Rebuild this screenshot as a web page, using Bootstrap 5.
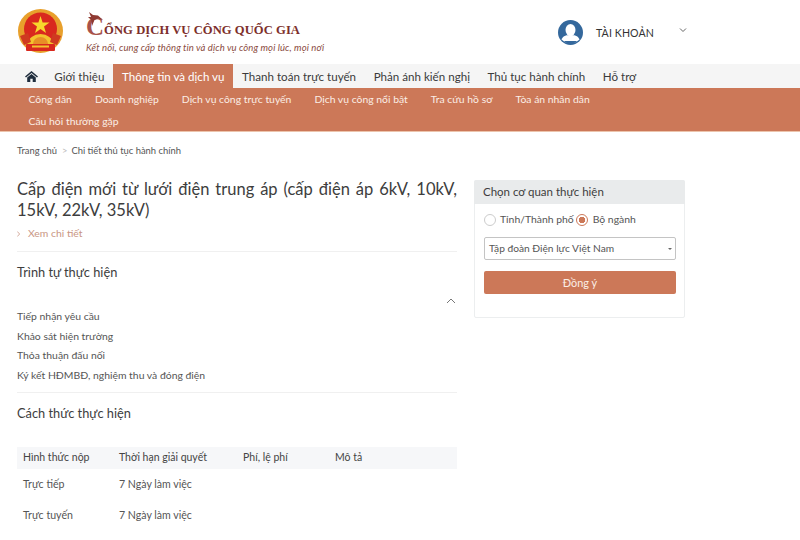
<!DOCTYPE html>
<html lang="vi"><head><meta charset="utf-8"><title>Cổng dịch vụ công quốc gia</title>
<link href="https://cdn.jsdelivr.net/npm/bootstrap@5.3.0/dist/css/bootstrap.min.css" rel="stylesheet">
<style>
html,body{height:540px;overflow:hidden}
body{font-family:Lato,"Noto Sans",sans-serif;font-size:11.5px;color:#444;background:#fff}
a{text-decoration:none}
.top-head{height:64px;padding-left:17px}
.crest{margin-top:6px}
.brand-block{margin-left:22px;margin-top:12px}
.brand-name{font-family:"Liberation Serif",serif;font-weight:700;font-size:12.6px;color:#7d2f2b;line-height:30px;height:30px;position:relative;letter-spacing:.05px}
.brand-c{font-size:25px;color:#a8524a;vertical-align:-1px}
.brand-dragon{position:absolute;left:0;top:0}
.brand-sub{font-style:italic;font-size:9.5px;color:#8a4a40;line-height:12px;letter-spacing:.1px}
.acct{margin-left:auto;margin-right:113px;margin-top:7px;height:50px;width:129px;color:#333;font-size:10.6px}
.acct-name{margin-left:13px;margin-top:3px;letter-spacing:.1px}
.acct-caret{margin-left:auto;margin-top:-5px}
.main-nav{background:#f5f5f5;height:24px;padding-left:25px}
.main-nav a{color:#3b3b3b;font-size:11.6px;line-height:25px;display:block;padding:0 8.8px}
.main-nav a.home-link{padding:0 7.5px 0 0}
.main-nav a.on{background:#cc7858;color:#fff}
.sub-nav{background:#cc7858;border-bottom:1px solid #ecc4ac;height:44px;padding-left:17px;padding-right:150px}
.sub-nav a{color:#fbeee6;font-size:10.4px;line-height:22px;display:block;padding:0 11.5px}
.crumbs{padding:12px 17px 0;height:45px;font-size:9.4px;line-height:14px;color:#555}
.crumbs .sep{color:#bbb;margin:0 4px 0 5px}
.page-cols{padding-left:17px;width:685px;gap:17px;align-items:flex-start}
.left-col{width:440px;flex:none}
.right-col{width:211px;flex:none;margin-top:3px}
.doc-title{font-size:16.5px;line-height:21px;font-weight:400;color:#3d3d3d;text-align:justify;margin:0;padding-top:2px}
.doc-more{color:#c99684;font-size:10.4px;line-height:14px;margin-top:5px;border-bottom:1px solid #f0f0f0;height:26px}
.doc-more span{margin-left:8px}
.sec-title{font-size:12.8px;line-height:16px;color:#3d3d3d;margin:0;font-weight:400}
.sec-one{padding-top:12px;height:46px}
.step-toggle{height:11px;text-align:right;padding-right:1px;line-height:0}
.step{font-size:10.4px;line-height:14px;height:19.5px;color:#555}
.sec-rule{border-top:1px solid #f0f0f0;margin-top:5px;padding-top:12px;height:55px}
.fee-table{font-size:10.6px;color:#555;margin:0;table-layout:fixed;width:440px}
.fee-table th{background:#f6f7f9;font-weight:400;font-size:10.5px;color:#444;padding:0 6px;height:22px;border:0;box-shadow:none;vertical-align:middle}
.fee-table td{padding:0 6px;height:31px;border:0;color:#555;box-shadow:none;vertical-align:middle}
.agency-box{border:1px solid #eceeef;border-radius:2px;height:138px}
.agency-head{background:#e9ebec;height:24px;line-height:24px;padding:0 9px;color:#3d3d3d;font-size:11.5px;margin:-1px -1px 0;border-radius:2px 2px 0 0}
.agency-body{padding:0 8px 0 9px}
.radio-row{height:33px;color:#555;font-size:10.4px;padding-bottom:2px}
.radio-dot{width:12px;height:12px;border-radius:50%;border:1px solid #ccc;flex:none;margin-right:4px;background:#fff;display:block}
.radio-dot.sel{border-color:#cc7858;background:radial-gradient(circle,#cc7858 3px,#fff 3.5px);margin-left:2px;margin-right:5px}
.agency-select{height:23px;border:1px solid #c4c4c4;border-radius:2px;padding:0 4px;color:#555;font-size:10.2px;line-height:21px;margin-bottom:11px}
.agency-select i{border:2.5px solid transparent;border-top-color:#666;border-bottom:0;display:block;margin-right:-1px}
.agree-btn{background:#cc7858;color:#fbeee6;font-size:10.9px;height:23px;line-height:21px;padding:0;border:0;border-radius:2px;width:100%;display:block}
</style></head><body>
<header class="top-head d-flex align-items-start">
  <svg class="crest" width="47" height="50" viewBox="0 0 47 50" role="img" aria-label="Quốc huy">
    <ellipse cx="23.5" cy="25" rx="22.5" ry="22" fill="#e8a02c"/>
    <circle cx="23.5" cy="23" r="16.5" fill="#d9281e"/>
    <polygon points="23.5,10 25.6,16.5 32.5,16.5 27,20.6 29,27 23.5,23 18,27 20,20.6 14.5,16.5 21.4,16.5" fill="#f7d72c"/>
    <path d="M11 38 A12.5 10 0 0 1 36 38Z" fill="#f3c22e"/>
    <path d="M16 38 A7.5 7 0 0 1 31 38Z" fill="#e88e26"/>
    <path d="M3 30 L11 27 L14 36 L7 39Z M44 30 L36 27 L33 36 L40 39Z" fill="#cf3a20"/>
    <rect x="9" y="38" width="29" height="7" rx="1" fill="#d9281e"/>
    <rect x="15" y="39.5" width="17" height="2" fill="#f3c22e"/>
  </svg>
  <div class="brand-block">
    <div class="brand-name"><svg class="brand-dragon" width="18" height="14" viewBox="0 0 18 14" aria-hidden="true"><path d="M3 0 L7 3 L12 3.5 L17 8 L12 6.5 L8.5 8 L6 14 L5.2 8 L2 5 L5 5 Z" fill="#8f3a32"/></svg><span class="brand-c">C</span>ỔNG DỊCH VỤ CÔNG QUỐC GIA</div>
    <div class="brand-sub">Kết nối, cung cấp thông tin và dịch vụ công mọi lúc, mọi nơi</div>
  </div>
  <div class="acct d-flex align-items-center">
    <svg width="25" height="25" viewBox="0 0 25 25" aria-hidden="true"><circle cx="12.5" cy="12.5" r="12.5" fill="#34689c"/><ellipse cx="12.5" cy="10" rx="5" ry="6" fill="#fff"/><path d="M3.5 19.5 C5 15.5 9 15 12.5 15 C16 15 20 15.5 21.5 19.5 C19 22 16 23 12.5 23 C9 23 6 22 3.5 19.5Z" fill="#fff"/><path d="M6 21 H19 C17 23 15 24 12.5 24 C10 24 8 23 6 21Z" fill="#34689c"/></svg>
    <span class="acct-name">TÀI KHOẢN</span>
    <svg class="acct-caret" width="8" height="6" viewBox="0 0 8 6" aria-hidden="true"><path d="M1 1.5 L4 4.5 L7 1.5" fill="none" stroke="#666" stroke-width="1"/></svg>
  </div>
</header>
<nav class="main-nav d-flex">
  <a class="home-link d-flex align-items-center" href="#" aria-label="Trang chủ"><svg width="13" height="11" viewBox="0 0 13 11" aria-hidden="true"><path d="M6.5 0 L13 5.6 L12 6.6 L6.5 2 L1 6.6 L0 5.6Z M2.2 6.6 L6.5 3 L10.8 6.6 V11 H7.7 V7.8 H5.3 V11 H2.2Z" fill="#1f2d3d"/></svg></a>
  <a href="#">Giới thiệu</a><a class="on" href="#">Thông tin và dịch vụ</a><a href="#">Thanh toán trực tuyến</a><a href="#">Phản ánh kiến nghị</a><a href="#">Thủ tục hành chính</a><a href="#">Hỗ trợ</a>
</nav>
<nav class="sub-nav d-flex flex-wrap">
  <a href="#">Công dân</a><a href="#">Doanh nghiệp</a><a href="#">Dịch vụ công trực tuyến</a><a href="#">Dịch vụ công nổi bật</a><a href="#">Tra cứu hồ sơ</a><a href="#">Tòa án nhân dân</a><a href="#">Câu hỏi thường gặp</a>
</nav>
<div class="crumbs">Trang chủ<span class="sep">&gt;</span>Chi tiết thủ tục hành chính</div>
<main class="page-cols d-flex">
  <section class="left-col">
    <h1 class="doc-title">Cấp điện mới từ lưới điện trung áp (cấp điện áp 6kV, 10kV, 15kV, 22kV, 35kV)</h1>
    <div class="doc-more"><svg width="3" height="6" viewBox="0 0 3 6" aria-hidden="true"><path d="M.3 .5 L2.6 3 L.3 5.5" fill="none" stroke="#c99684" stroke-width=".8"/></svg><span>Xem chi tiết</span></div>
    <div class="sec-one"><h2 class="sec-title">Trình tự thực hiện</h2></div>
    <div class="step-toggle"><svg width="10" height="6" viewBox="0 0 10 6" aria-hidden="true"><path d="M1 5 L5 1 L9 5" fill="none" stroke="#777" stroke-width="1"/></svg></div>
    <div class="step">Tiếp nhận yêu cầu</div>
    <div class="step">Khảo sát hiện trường</div>
    <div class="step">Thỏa thuận đấu nối</div>
    <div class="step">Ký kết HĐMBĐ, nghiệm thu và đóng điện</div>
    <div class="sec-rule"><h2 class="sec-title">Cách thức thực hiện</h2></div>
    <table class="table fee-table">
      <colgroup><col style="width:96px"><col style="width:124px"><col style="width:92px"><col></colgroup>
      <thead><tr><th>Hình thức nộp</th><th>Thời hạn giải quyết</th><th>Phí, lệ phí</th><th>Mô tả</th></tr></thead>
      <tbody><tr><td>Trực tiếp</td><td>7 Ngày làm việc</td><td></td><td></td></tr>
      <tr><td>Trực tuyến</td><td>7 Ngày làm việc</td><td></td><td></td></tr></tbody>
    </table>
  </section>
  <aside class="right-col agency-box">
    <div class="agency-head">Chọn cơ quan thực hiện</div>
    <div class="agency-body">
      <div class="radio-row d-flex align-items-center"><span class="radio-dot"></span>Tỉnh/Thành phố<span class="radio-dot sel"></span>Bộ ngành</div>
      <div class="agency-select d-flex align-items-center justify-content-between">Tập đoàn Điện lực Việt Nam<i></i></div>
      <button class="agree-btn" type="button">Đồng ý</button>
    </div>
  </aside>
</main>
<script src="https://cdn.jsdelivr.net/npm/bootstrap@5.3.0/dist/js/bootstrap.bundle.min.js"></script>
</body></html>
